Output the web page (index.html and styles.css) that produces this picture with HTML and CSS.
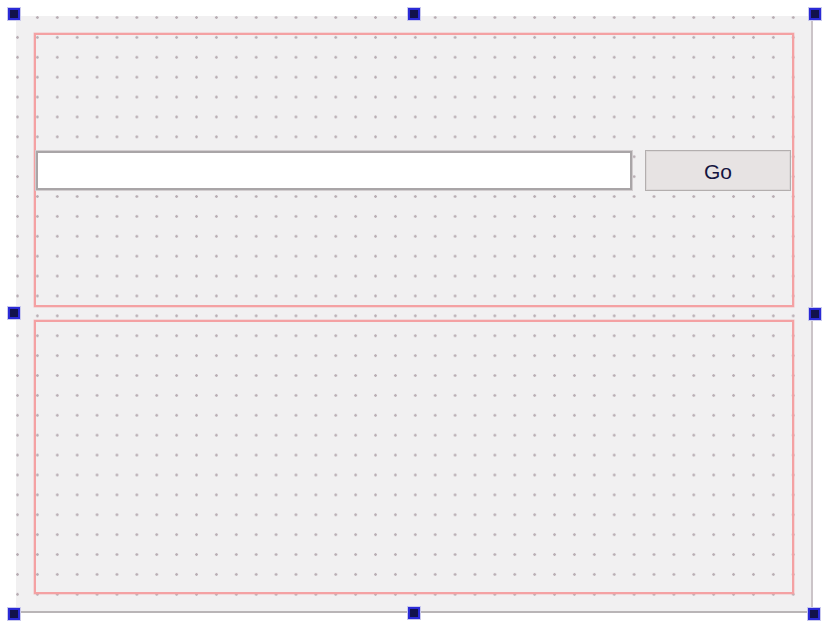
FILE: index.html
```html
<!DOCTYPE html>
<html>
<head>
<meta charset="utf-8">
<link rel="stylesheet" href="styles.css">
</head>
<body>
<div class="canvas">
  <div class="form">
    <div class="layout layout-top">
      <div class="line-edit"></div>
      <div class="button">Go</div>
    </div>
    <div class="layout layout-bottom"></div>
  </div>
  <span class="handle h-tl"></span>
  <span class="handle h-tm"></span>
  <span class="handle h-tr"></span>
  <span class="handle h-ml"></span>
  <span class="handle h-mr"></span>
  <span class="handle h-bl"></span>
  <span class="handle h-bm"></span>
  <span class="handle h-br"></span>
</div>
</body>
</html>
```

FILE: styles.css
```css
html, body {
  margin: 0;
  padding: 0;
  background: #ffffff;
}

.canvas {
  position: relative;
  width: 829px;
  height: 627px;
  padding: 16px 0 0 16px;
  box-sizing: border-box;
}

.form {
  width: 797px;
  height: 597px;
  box-sizing: border-box;
  padding: 17px 17px 17px 18px;
  background-color: #f1f0f1;
  background-image: radial-gradient(circle at 1.5px 1.5px, #b9aeb4 1px, rgba(190,180,186,0) 1.6px);
  background-size: 19.9px 19.9px;
  background-position: 0 0;
  border-right: 2px solid #cbc4c8;
  border-bottom: 2px solid #b9b5b7;
  display: flex;
  flex-direction: column;
  gap: 13px;
}

.layout {
  height: 274px;
  box-sizing: border-box;
  border: 2px solid #f4a1a3;
  box-shadow: 0 0 0 0.5px rgba(244,161,163,0.6);
}

.layout-top {
  display: flex;
  align-items: center;
  gap: 13px;
  padding-right: 1px;
}

.line-edit {
  flex: 1;
  height: 39px;
  box-sizing: border-box;
  background: #ffffff;
  border: 2px solid #a9a5a7;
  box-shadow: 0 0 0 1px #d2cdcf;
  margin-top: 1px;
}

.button {
  width: 146px;
  height: 41px;
  box-sizing: border-box;
  background: #e7e3e3;
  border: 1px solid #b3aeae;
  box-shadow: inset 0 0 0 1px #dcd8d8;
  display: flex;
  align-items: center;
  justify-content: center;
  font-family: "Liberation Sans", Arial, sans-serif;
  font-size: 21px;
  color: #15153f;
  padding-top: 3px;
}

.handle {
  position: absolute;
  width: 12px;
  height: 12px;
  box-sizing: border-box;
  background: #12124c;
  border: 2px solid #2a2ad6;
  box-shadow: 0 0 0 1px #c9c9ee;
}

.h-tl { left: 8px; top: 8px; }
.h-tm { left: 408px; top: 8px; }
.h-tr { left: 809px; top: 8px; }
.h-ml { left: 8px; top: 307px; }
.h-mr { left: 809px; top: 308px; }
.h-bl { left: 8px; top: 608px; }
.h-bm { left: 408px; top: 607px; }
.h-br { left: 808px; top: 608px; }
```
